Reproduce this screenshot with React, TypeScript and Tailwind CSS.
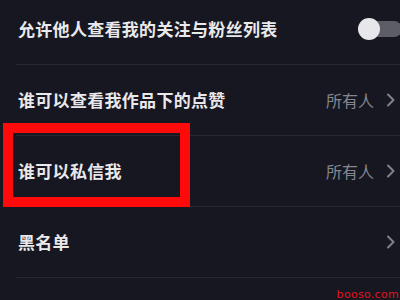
import React from "react";

const font = {
  fontFamily: '"Noto Sans CJK SC", "Noto Sans", sans-serif',
};

function Chevron() {
  return (
    <svg width="10" height="16" viewBox="0 0 10 16" className="text-[#80818a]">
      <path
        d="M2 2.5 L7.5 8 L2 13.5"
        fill="none"
        stroke="currentColor"
        strokeWidth="2"
        strokeLinecap="round"
        strokeLinejoin="round"
      />
    </svg>
  );
}

function Row({
  label,
  value,
  first,
  right,
}: {
  label: string;
  value?: string;
  first?: boolean;
  right?: React.ReactNode;
}) {
  return (
    <div className="ml-[16px] border-b border-[#262731]">
      <div
        className={`flex items-center justify-between pl-[2px] ${
          first ? "h-[64px] pb-[6px]" : "h-[70px]"
        }`}
      >
        <span className="text-[17px] font-bold text-[#e9e9ec] tracking-[0.3px]">
          {label}
        </span>
        {right ?? (
          <div className="flex items-center gap-[12px] pr-[4px]">
            {value && (
              <span className="text-[16px] text-[#85868e]">{value}</span>
            )}
            <Chevron />
          </div>
        )}
      </div>
    </div>
  );
}

function Toggle() {
  return (
    <div className="relative w-[44px] h-[24px] -mr-[2px] flex items-center">
      <div className="ml-[12px] h-[16px] w-[40px] rounded-full bg-[#5c5d66]" />
      <div className="absolute left-0 top-[1px] h-[22px] w-[22px] rounded-full bg-[#e7e7eb]" />
    </div>
  );
}

export default function App() {
  return (
    <div
      className="relative w-[400px] h-[300px] overflow-hidden bg-[#161721]"
      style={font}
    >
      <div>
        <Row label="允许他人查看我的关注与粉丝列表" first right={<Toggle />} />
        <Row label="谁可以查看我作品下的点赞" value="所有人" />
        <Row label="谁可以私信我" value="所有人" />
        <Row label="黑名单" />
      </div>

      <div className="absolute left-[3px] top-[123px] w-[187px] h-[84px] border-[10px] border-[#ff0a0a]" />

      <div
        className="absolute right-[1px] bottom-[0px] leading-none text-[11px] text-[#e0141e] tracking-[0.3px]"
        style={{ fontFamily: '"DejaVu Sans", sans-serif' }}
      >
        booso.com
      </div>
    </div>
  );
}
